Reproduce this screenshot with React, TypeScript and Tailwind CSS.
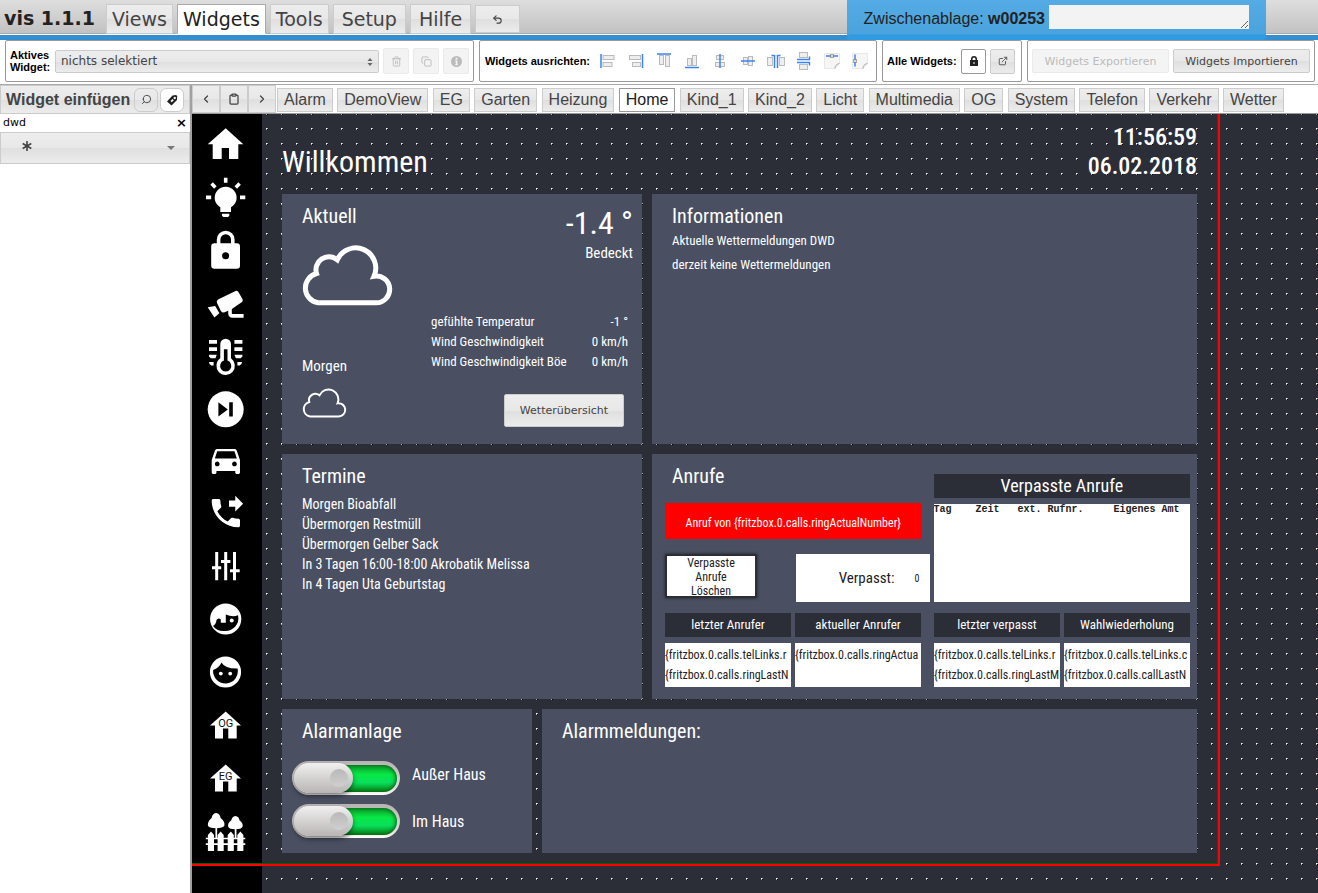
import React from "react";
import clsx from "clsx";
import { ChevronLeft, ChevronRight, Clipboard, Copy, ExternalLink, Search, Trash2, Undo2 } from "lucide-react";

const menuTabs = ["Views", "Widgets", "Tools", "Setup", "Hilfe"];

const viewTabs = [
  "Alarm", "DemoView", "EG", "Garten", "Heizung", "Home", "Kind_1", "Kind_2",
  "Licht", "Multimedia", "OG", "System", "Telefon", "Verkehr", "Wetter",
];

const weather = [
  ["gefühlte Temperatur", "-1 °"],
  ["Wind Geschwindigkeit", "0 km/h"],
  ["Wind Geschwindigkeit Böe", "0 km/h"],
];

const appointments = [
  "Morgen Bioabfall",
  "Übermorgen Restmüll",
  "Übermorgen Gelber Sack",
  "In 3 Tagen 16:00-18:00 Akrobatik Melissa",
  "In 4 Tagen Uta Geburtstag",
];

const callsLeft = [
  { title: "letzter Anrufer", lines: ["{fritzbox.0.calls.telLinks.r", "{fritzbox.0.calls.ringLastN"] },
  { title: "aktueller Anrufer", lines: ["{fritzbox.0.calls.ringActua"] },
];

const callsRight = [
  { title: "letzter verpasst", lines: ["{fritzbox.0.calls.telLinks.r", "{fritzbox.0.calls.ringLastM"] },
  { title: "Wahlwiederholung", lines: ["{fritzbox.0.calls.telLinks.c", "{fritzbox.0.calls.callLastN"] },
];

const raised = "border border-[#ccc] bg-[linear-gradient(#ededed_0%,#e8e8e8_50%,#dfdfdf_51%,#ececec_100%)] text-[#444]";

/* every sidebar icon is drawn on a 40x40 board */
const navIcons: { name: string; art: React.ReactNode }[] = [
  { name: "Home", art: <path d="M20.7 4.3L38.3 20.3H33.3V35H24V24H16.7V35H7.7V20.3H2.7Z" /> },
  {
    name: "Licht",
    art: (
      <>
        <path d="M15.3 35V30.3A11 11 0 1 1 26 30.3V35Z" />
        <path d="M17 36.7h7.3v2l-1.3 1.4h-4.7L17 38.7Z" />
        <path d="M20.7.7v5M1 20.4h5.2M35 20.4h5.3M6.6 6.6l3.8 3.8M34.6 6.6l-3.8 3.8" stroke="#fff" strokeWidth="3.6" />
      </>
    ),
  },
  {
    name: "Schloss",
    art: (
      <>
        <rect x="6.2" y="13.3" width="28.8" height="25.4" rx="3.2" />
        <path d="M13.6 15V9.6a7.1 7.1 0 0 1 14.2 0V15" fill="none" stroke="#fff" strokeWidth="3.6" />
        <circle cx="20.6" cy="25.7" r="3.5" fill="#000" />
      </>
    ),
  },
  {
    name: "Kamera",
    art: (
      <>
        <path d="M13 16.6L30.6 8q1.6-.7 2.6.7l4.3 7.4q.8 1.6-.5 2.8l-10.5 7.4-6.8 3q-2.6.6-3.8-1.4L12 20q-.9-2.3 1-3.4Z" />
        <path d="M2.7 24.3l7.5-1.4 4.2 7.3-5 4.3Z" />
        <path d="M25 24.5v5.8q0 2.6 2.6 2.6h11" fill="none" stroke="#fff" strokeWidth="3.6" />
      </>
    ),
  },
  {
    name: "Heizung",
    art: (
      <>
        <path d="M15.3 8a5.3 5.3 0 0 1 10.7 0v14.3a9.2 9.2 0 1 1-10.7 0Z" />
        <path d="M18.9 13.3h3.6v11.3a5.6 5.6 0 1 1-3.6 0Z" fill="#000" />
        <path d="M4 4h8v3.7H4ZM4 11.3h8V15H4ZM4 18.7h7.7L10.5 22.3H5.8L4 20.4ZM4 26h4.6v3.4H6.4Q4 28.8 4 26ZM29.4 4h8v3.7h-8ZM29.4 11.3h8V15h-8ZM29.4 18.7h8v1.8l-1.8 1.8h-4.7ZM32.4 26H37q0 2.8-2.4 3.4h-2.2Z" />
      </>
    ),
  },
  {
    name: "Medien",
    art: (
      <>
        <circle cx="20.7" cy="20.3" r="18" />
        <path d="M13.4 13.2v14.4l9.4-7.2ZM24.2 13.2h3.6v14.4h-3.6Z" fill="#000" />
      </>
    ),
  },
  {
    name: "Auto",
    art: (
      <path transform="translate(2 .7) scale(1.57)" d="M18.92 5.01C18.72 4.42 18.16 4 17.5 4h-11c-.66 0-1.21.42-1.42 1.01L3 11v8c0 .55.45 1 1 1h1c.55 0 1-.45 1-1v-1h12v1c0 .55.45 1 1 1h1c.55 0 1-.45 1-1v-8l-2.08-5.99zM6.5 15c-.83 0-1.5-.67-1.5-1.5S5.67 12 6.5 12s1.5.67 1.5 1.5S7.33 15 6.5 15zm11 0c-.83 0-1.5-.67-1.5-1.5s.67-1.5 1.5-1.5 1.5.67 1.5 1.5-.67 1.5-1.5 1.5zM5 10l1.5-4.5h11L19 10H5z" />
    ),
  },
  {
    name: "Telefon",
    art: (
      <path transform="translate(2 -.7) scale(1.57)" d="M18 11l5-5-5-5v3h-4v4h4v3zm2 4.5c-1.25 0-2.45-.2-3.57-.57-.35-.11-.74-.03-1.02.24l-2.2 2.2c-2.83-1.44-5.15-3.75-6.59-6.59l2.2-2.21c.28-.26.36-.65.25-1C8.7 6.45 8.5 5.25 8.5 4c0-.55-.45-1-1-1H4c-.55 0-1 .45-1 1 0 9.39 7.61 17 17 17 .55 0 1-.45 1-1v-3.5c0-.55-.45-1-1-1z" />
    ),
  },
  {
    name: "Regler",
    art: <path d="M11.7 4v28.3M20.7 4v28.3M29.5 4v28.3M7 19.7h9.2M16 13.5h9.4M25 22.8h9.7" stroke="#fff" strokeWidth="3" />,
  },
  {
    name: "Kind 1",
    art: (
      <>
        <circle cx="20.7" cy="18" r="15.6" />
        <path d="M8 25q3-1.5 3.5-6 2-2.800 4.300-.4v3.200h5V13.500q6.500 2.800 12.300.8 1.200 7-3 11.500-4.400 4.500-10.600 4.200Q12 30.500 8 25Z" fill="#000" />
        <circle cx="26.7" cy="19.6" r="2" />
      </>
    ),
  },
  {
    name: "Kind 2",
    art: (
      <>
        <circle cx="20.5" cy="18" r="15.6" />
        <path d="M16.5 8.5Q20 15 32.6 14.6a12.4 12.4 0 1 1-24.5 1.5Q14 14 16.5 8.5Z" fill="#000" />
        <circle cx="15.8" cy="19.6" r="1.9" />
        <circle cx="25.2" cy="19.6" r="1.9" />
      </>
    ),
  },
  { name: "Obergeschoss", art: <HouseWithLabel label="OG" /> },
  { name: "Erdgeschoss", art: <HouseWithLabel label="EG" /> },
  {
    name: "Garten",
    art: (
      <>
        <path d="M11 0q4 .6 4.6 5 4.6 3.6 3.8 7.6-1.2 2.7-8.4 2.7T2.9 12.6Q2.4 8.5 6.6 5 7.4.6 11 0ZM30.3 3q3.8.6 4.2 4.3 4 3 3 6.5-1 2.5-7.2 2.5t-7.1-2.5q-.8-3.6 3.1-6.5Q27 3.600 30.300 3Z" />
        <path d="M11.3 15v10M30.6 16v9M.8 25.5h39.5M.8 31.2h39.5" stroke="#fff" strokeWidth="1.7" />
        <path d="M2.9 22L6 18.5 9 22v16H2.9ZM12.6 22l3.1-3.5 3 3.5v16h-6.1ZM22.7 22l3.1-3.5 3 3.5v16h-6.1ZM32.3 22l3.1-3.5 3 3.5v16h-6.1Z" />
      </>
    ),
  },
];

function HouseWithLabel({ label }: { label: string }) {
  return (
    <>
      <path d="M20.7 4.5L36 18.5H31.7V31.5H23.3V21.5H18V31.5H10V18.5H5Z" />
      <text x="20.7" y="20" textAnchor="middle" fontSize="11" fill="#111" fontFamily="Roboto, sans-serif">{label}</text>
    </>
  );
}

const box = { fill: "#eee", stroke: "#bbb" };
const line = { stroke: "#3b82f6", strokeWidth: 1.5 };

const sheet = (
  <>
    <path d="M1.5 1.5h15v10l-4.5 5H1.5Z" fill="#f6f6f6" stroke="#e8e8e8" />
    <path d="M12 16.5q-.2-4 4.5-5" fill="none" stroke="#aaa" />
  </>
);

const alignIcons: { name: string; art: React.ReactNode }[] = [
  { name: "Links", art: <><rect x="4" y="3.5" width="11" height="4" {...box} /><rect x="4" y="10.5" width="9" height="4" {...box} /><path d="M2 2v14" {...line} /></> },
  { name: "Rechts", art: <><rect x="2.5" y="3.5" width="11" height="4" {...box} /><rect x="5.5" y="10.5" width="8" height="4" {...box} /><path d="M15.5 2v14" {...line} /></> },
  { name: "Oben", art: <><rect x="4.5" y="3.5" width="4" height="9" {...box} /><rect x="10.5" y="3.5" width="4" height="11" {...box} /><path d="M2 2h14" {...line} /></> },
  { name: "Unten", art: <><rect x="4.5" y="6.5" width="4" height="7" {...box} /><rect x="9.5" y="3.5" width="4" height="10" {...box} /><path d="M2 15.5h14" {...line} /></> },
  { name: "Mitte horizontal", art: <><rect x="5.5" y="3.5" width="7" height="4" {...box} /><rect x="4.5" y="10.5" width="9" height="4" {...box} /><path d="M9 2v14" {...line} /></> },
  { name: "Mitte vertikal", art: <><rect x="4.5" y="5.5" width="4" height="7" {...box} /><rect x="9.5" y="4.5" width="4" height="9" {...box} /><path d="M2 9h14" {...line} /></> },
  { name: "Abstand horizontal", art: <><rect x=".5" y="5.5" width="5" height="8" {...box} /><rect x="12.5" y="5.5" width="5" height="8" {...box} /><path d="M7.5 3v13M10.5 3v13M4.5 3.5h3M10.5 3.5h3" {...line} /></> },
  { name: "Abstand vertikal", art: <><rect x="4.5" y=".5" width="8" height="5" {...box} /><rect x="4.5" y="12.5" width="8" height="5" {...box} /><path d="M2 7.5h13M2 10.5h13M14.5 4.5v3M14.5 10.5v3" {...line} /></> },
  { name: "Gleiche Breite", art: <>{sheet}<path d="M3 4h12" {...line} /><rect x="7.5" y="2.8" width="3" height="2.4" fill="#fff" stroke="#888" /></> },
  { name: "Gleiche Höhe", art: <>{sheet}<path d="M4 2.5v12" {...line} /><rect x="2.8" y="7.5" width="2.4" height="3" fill="#fff" stroke="#888" /></> },
];

function InfoDot({ size }: { size: number }) {
  return (
    <svg viewBox="0 0 12 12" width={size} height={size} fill="currentColor">
      <path d="M6 0a6 6 0 1 1 0 12A6 6 0 0 1 6 0ZM5 2v2h2V2ZM4.5 5v1h.7v3h-.7v1h3V9H7V5Z" fillRule="evenodd" />
    </svg>
  );
}

function ToolGroup({ className, children }: { className?: string; children: React.ReactNode }) {
  return (
    <div className={clsx("flex h-[42px] items-center rounded-[2px] border border-[#999] bg-white", className)}>
      {children}
    </div>
  );
}

function Cloud({ className, stroke }: { className: string; stroke: number }) {
  return (
    <svg viewBox="0 0 91 61" className={clsx("overflow-visible", className)} fill="none" stroke="#fff" strokeWidth={stroke}>
      <path d="M16 57.8A15 15 0 0 1 14.5 28.5A13 13 0 0 1 35.3 14.8A20 20 0 1 1 72 31.2A13.4 13.4 0 1 1 74 57.8Z" />
    </svg>
  );
}

function Panel({ title, className, children }: { title: string; className?: string; children?: React.ReactNode }) {
  return (
    <section className={clsx("bg-[#4a5062] pt-[10px] pl-5", className)}>
      <h2 className="text-[20px] leading-6">{title}</h2>
      {children}
    </section>
  );
}

function Switch({ id }: { id: string }) {
  return (
    <span className="relative flex h-[34px] w-[108px] items-center rounded-full bg-[linear-gradient(#b5b3b3,#e6e2de_85%,#fff)] p-[3px]">
      <input id={id} type="checkbox" defaultChecked className="absolute inset-0 z-10 h-full w-full cursor-pointer opacity-0" />
      <span className="ml-8 h-[27px] flex-1 rounded-full bg-[linear-gradient(#089a28,#09e845_35%,#08df5c_65%,#067f10)] shadow-[inset_-1px_0_4px_#0a5a14]" />
      <span className="absolute top-[2px] left-[2px] flex h-[30px] w-[59px] items-center justify-end rounded-full bg-[linear-gradient(#f1efef,#cfcccc_60%,#b9b5b5)] pr-[5px] shadow-[0_3px_5px_rgba(0,0,0,0.5)]">
        <span className="h-[18px] w-[18px] rounded-full bg-[linear-gradient(#b9b9b9,#cfcfcf)]" />
      </span>
    </span>
  );
}

function CallBox({ title, lines }: { title: string; lines: string[] }) {
  return (
    <div className="min-w-0 flex-1">
      <h3 className="bg-[#2b2d37] text-center text-[13px] leading-6">{title}</h3>
      <div className="mt-[6px] h-11 overflow-hidden bg-white pt-[2px] text-[12px] leading-5 whitespace-nowrap text-[#222]">
        {lines.map((l) => <p key={l}>{l}</p>)}
      </div>
    </div>
  );
}

export default function App() {
  return (
    <div className="flex min-h-screen flex-col bg-white font-['DejaVu_Sans',sans-serif]">
      {/* Main menu */}
      <header className="flex h-10 items-start border-b-[5px] border-[#348fd2] bg-[linear-gradient(#dedede,#c2c2c2_33px,#aaa_33px,#aaa_34px,#fff_34px)]">
        <h1 className="w-[106px] pl-1 text-[19px] leading-9 font-bold text-[#222]">vis 1.1.1</h1>
        <nav className="flex items-end gap-1 pt-1">
          {menuTabs.map((t, i) => (
            <button
              key={t}
              className={clsx(
                "h-[30px] border text-[19px] leading-7",
                i < 3 ? "px-[5px]" : "px-2",
                t === "Widgets" ? "border-[#aaa] border-b-white bg-white text-[#212121]" : raised,
              )}
            >
              {t}
            </button>
          ))}
          <button aria-label="Rückgängig" className={clsx("flex h-7 w-[45px] items-center justify-center self-center", raised)}>
            <Undo2 size={11} strokeWidth={2.5} />
          </button>
        </nav>
        <div className="z-10 mr-[52px] ml-auto flex h-10 items-start gap-1 rounded-b bg-[linear-gradient(#55abe4,#4aa3dd_34px,#309ae2_35px)] px-[17px] font-['Liberation_Sans',sans-serif] text-[16px] leading-[37px] text-[#222]">
          <label htmlFor="clip">Zwischenablage: <b>w00253</b></label>
          <textarea id="clip" className="mt-[5px] h-6 w-[200px] bg-[#f3f3f3]" />
        </div>
      </header>

      {/* Toolbar */}
      <div className="flex h-[45px] items-start gap-[5px] border-b border-[#aaa] pr-[3px] pl-[5px] font-['Liberation_Sans',sans-serif] text-[11px] font-bold text-black">
        <ToolGroup className="w-[469px] gap-1 px-1">
          <label htmlFor="active" className="w-[41px] leading-3">Aktives Widget:</label>
          <div className="relative flex-1">
            <select id="active" className={clsx("h-[23px] w-full appearance-none rounded-[2px] px-[5px] font-['DejaVu_Sans',sans-serif] text-[12px] font-normal", raised)}>
              <option>nichts selektiert</option>
            </select>
            <svg viewBox="0 0 6 8" className="pointer-events-none absolute top-2 right-[6px] h-2 w-[6px]" fill="#666"><path d="M3 0l2.5 3h-5ZM3 8l2.5-3h-5Z" /></svg>
          </div>
          {[Trash2, Copy, InfoDot].map((Icon, i) => (
            <button key={i} disabled aria-label={["Löschen", "Kopieren", "Info"][i]} className="flex h-[26px] w-[26px] items-center justify-center rounded-[2px] border border-[#eaeaea] bg-[#f3f3f3] text-[#bbb]">
              <Icon size={11} />
            </button>
          ))}
        </ToolGroup>
        <ToolGroup className="w-[398px] pl-[5px]">
          <span className="w-[109px]">Widgets ausrichten:</span>
          {alignIcons.map((a) => (
            <button key={a.name} aria-label={a.name} className="flex w-7 justify-center">
              <svg viewBox="0 0 18 18" className="h-[18px] w-[18px] overflow-visible">{a.art}</svg>
            </button>
          ))}
        </ToolGroup>
        <ToolGroup className="w-[140px] gap-1 pl-1">
          <span className="w-[70px] whitespace-nowrap">Alle Widgets:</span>
          <button aria-label="Sperren" className="flex h-[25px] w-[25px] items-center justify-center rounded-[2px] border border-[#999] bg-white text-[#222]">
            <svg viewBox="0 0 8 10" className="h-[10px] w-2" fill="currentColor"><path d="M0 4h1V3a3 3 0 0 1 6 0v1h1v6H0ZM2.5 4h3V3a1.5 1.5 0 0 0-3 0Z" /><path d="M3.5 6h1v2h-1Z" fill="#fff" /></svg>
          </button>
          <button aria-label="Öffnen" className={clsx("flex h-[25px] w-[25px] items-center justify-center rounded-[2px]", raised)}>
            <ExternalLink size={10} />
          </button>
        </ToolGroup>
        <ToolGroup className="flex-1 gap-1 px-1 font-['DejaVu_Sans',sans-serif] font-normal">
          <button disabled className="h-6 flex-1 rounded-[2px] border border-[#eaeaea] bg-[#f4f4f4] pt-[2px] whitespace-nowrap text-[#bbb]">Widgets Exportieren</button>
          <button className={clsx("h-6 flex-1 rounded-[2px] pt-[2px] whitespace-nowrap", raised)}>Widgets Importieren</button>
        </ToolGroup>
      </div>

      <div className="flex flex-1">
        {/* Widget palette */}
        <aside className="flex w-[192px] shrink-0 flex-col border-r-2 border-[#a0a0a0]">
          <div className={clsx("flex h-[29px] items-center gap-[2px] pl-[5px] font-['Liberation_Sans',sans-serif]", raised)}>
            <h2 className="w-[126px] text-[16px] font-bold whitespace-nowrap">Widget einfügen</h2>
            <button aria-label="Suchen" className="flex h-6 w-6 items-center justify-center rounded-md border border-[#ccc]">
              <Search size={11} className="-scale-x-100" />
            </button>
            <button aria-label="Kategorien" className="flex h-6 w-6 items-center justify-center rounded-md border border-[#ccc] bg-white text-[#222]">
              <svg viewBox="0 0 12 12" className="h-3 w-3" fill="currentColor"><path d="M6.5 1.5L10 1l1.2 1L11 6l-5.5 5.5L1 7.5ZM8.7 2.8a1.2 1.2 0 1 0 .1 0ZM4.5 7l1.3 1.3 2-2L6.5 5Z" fillRule="evenodd" /></svg>
            </button>
          </div>
          <div className="flex h-[18px] items-center px-[3px]">
            <input aria-label="Filter" defaultValue="dwd" className="w-full min-w-0 flex-1 text-[11px] text-black outline-none" />
            <button aria-label="Leeren" className="text-[13px] leading-4 font-bold text-black">×</button>
          </div>
          <button aria-label="Widgetsatz" className={clsx("flex h-8 items-center justify-between pr-[14px] pl-5", raised)}>
            <svg viewBox="0 0 12 12" className="-mt-1 h-3 w-3" stroke="#444" strokeWidth="1.6"><path d="M6 1v10M1.7 3.5l8.6 5M10.3 3.5l-8.6 5" /></svg>
            <svg viewBox="0 0 8 4" className="h-1 w-2" fill="#777"><path d="M0 0h8L4 4Z" /></svg>
          </button>
        </aside>

        <div className="flex min-w-0 flex-1 flex-col">
          {/* View tabs */}
          <div className="flex h-[29px] items-center border-b border-[#999] font-['Liberation_Sans',sans-serif]">
            <div className="flex h-full">
              {[ChevronLeft, Clipboard, ChevronRight].map((Icon, i) => (
                <button key={i} aria-label={["Zurück", "Ablage", "Weiter"][i]} className={clsx("flex w-7 items-center justify-center", raised)}>
                  <Icon size={12} strokeWidth={2.5} />
                </button>
              ))}
            </div>
            <nav className="flex flex-1 justify-between pt-px pr-[34px] pl-px">
              {viewTabs.map((t) => (
                <button
                  key={t}
                  className={clsx("h-6 border px-[6px] text-[16px] leading-[22px]", t === "Home" ? "border-[#999] bg-white text-[#212121]" : raised)}
                >
                  {t}
                </button>
              ))}
            </nav>
          </div>

          {/* Canvas with the snap grid */}
          <main className="relative flex flex-1 bg-[#2b2d37] bg-[conic-gradient(at_1px_1px,transparent_270deg,#fff_0),conic-gradient(at_1px_1px,transparent_270deg,#000_0),conic-gradient(at_2px_2px,transparent_270deg,#ffffff99_0)] bg-[length:15px_15px] bg-[position:14px_14px,0px_0px,14px_14px] font-['Roboto_Condensed',Roboto,sans-serif] text-white">
            <nav className="flex w-[70px] shrink-0 flex-col gap-[13px] bg-black pt-[10px] pl-[13px]">
              {navIcons.map((n) => (
                <a key={n.name} href="#" aria-label={n.name}>
                  <svg viewBox="0 0 40 40" className="block h-10 w-10 overflow-visible" fill="#fff">{n.art}</svg>
                </a>
              ))}
            </nav>
            <div className="min-w-0 flex-1 pr-[121px] pl-5">
              <div className="flex h-20 items-start justify-between">
                <h1 className="pt-7 text-[30px] leading-10">Willkommen</h1>
                <div className="pt-[9px] text-right text-[24px] leading-[29px] font-medium">
                  <p>11:56:59</p>
                  <p>06.02.2018</p>
                </div>
              </div>

              <div className="grid grid-cols-[minmax(0,360fr)_minmax(0,545fr)] gap-[10px]">
                <section className="flex h-[250px] bg-[#4a5062] pt-[10px] pr-[9px] pl-5">
                  <div className="w-[129px]">
                    <h2 className="text-[20px] leading-6">Aktuell</h2>
                    <Cloud stroke={5} className="mt-[17px] h-[61px] w-[91px]" />
                    <h3 className="mt-[50px] text-[15px] leading-5">Morgen</h3>
                    <Cloud stroke={4} className="mt-3 h-[30px] w-[45px]" />
                  </div>
                  <div className="flex flex-1 flex-col items-end">
                    <p className="text-[32px] leading-[38px]">-1.4 °</p>
                    <p className="text-[15px] leading-[22px]">Bedeckt</p>
                    <table className="mt-12 w-full text-[13px] leading-5">
                      <tbody>
                        {weather.map(([k, v]) => (
                          <tr key={k}>
                            <th scope="row" className="p-0 text-left font-normal">{k}</th>
                            <td className="py-0 pr-[5px] pl-0 text-right">{v}</td>
                          </tr>
                        ))}
                      </tbody>
                    </table>
                    <button className={clsx("mt-[22px] mr-[9px] h-[33px] w-[120px] rounded-[2px] pt-[2px] font-['DejaVu_Sans',sans-serif] text-[11px]", raised)}>
                      Wetterübersicht
                    </button>
                  </div>
                </section>

                <Panel title="Informationen">
                  <div className="pt-px text-[13px] leading-6">
                    <p>Aktuelle Wettermeldungen DWD</p>
                    <p>derzeit keine Wettermeldungen</p>
                  </div>
                </Panel>

                <Panel title="Termine" className="h-[245px]">
                  <ul className="mt-[6px] text-[14px] leading-5">
                    {appointments.map((a) => <li key={a}>{a}</li>)}
                  </ul>
                </Panel>

                <section className="flex flex-col gap-[11px] bg-[#4a5062] pr-[7px] pl-[13px]">
                  <div className="grid h-[148px] grid-cols-2 gap-3">
                    <div>
                      <h2 className="pt-[10px] pl-[7px] text-[20px] leading-6">Anrufe</h2>
                      <p className="mt-[15px] h-9 bg-[#f00] text-center text-[12px] leading-10">
                        Anruf von {"{fritzbox.0.calls.ringActualNumber}"}
                      </p>
                      <div className="mt-[15px] flex items-start justify-between">
                        <button className="h-11 w-[92px] border-2 border-[#2b2d37] bg-white px-4 text-[12px] leading-[14px] text-[#222] shadow-[0_0_3px_#222]">
                          Verpasste Anrufe Löschen
                        </button>
                        <p className="-mr-2 flex h-12 w-[134px] items-center justify-end gap-5 bg-white pr-[10px] text-[15px] text-[#222]">
                          Verpasst: <span className="text-[10px]">0</span>
                        </p>
                      </div>
                    </div>
                    <div className="pt-5">
                      <h2 className="bg-[#2b2d37] text-center text-[18px] leading-6">Verpasste Anrufe</h2>
                      <pre className="mt-[6px] h-[98px] overflow-hidden bg-white font-['Liberation_Mono',monospace] text-[10px] leading-3 font-bold text-[#222]">
                        {"Tag    Zeit   ext. Rufnr.     Eigenes Amt"}
                      </pre>
                    </div>
                  </div>
                  <div className="flex gap-[13px]">
                    <div className="flex min-w-0 flex-1 gap-1">{callsLeft.map((c) => <CallBox key={c.title} {...c} />)}</div>
                    <div className="flex min-w-0 flex-1 gap-1">{callsRight.map((c) => <CallBox key={c.title} {...c} />)}</div>
                  </div>
                </section>
              </div>

              <div className="mt-[10px] grid h-36 grid-cols-[250fr_655fr] gap-[10px]">
                <Panel title="Alarmanlage">
                  <div className="mt-[18px] -ml-[10px] flex gap-3">
                    <div className="flex flex-col gap-[9px]">
                      <Switch id="away" />
                      <Switch id="home" />
                    </div>
                    <div className="flex flex-col gap-[27px] pt-1 text-[16px] leading-5">
                      <label htmlFor="away">Außer Haus</label>
                      <label htmlFor="home">Im Haus</label>
                    </div>
                  </div>
                </Panel>
                <Panel title="Alarmmeldungen:" />
              </div>
            </div>

            {/* Edge of the target screen */}
            <div className="pointer-events-none absolute top-0 right-[98px] left-0 h-[752px] border-r-2 border-b-2 border-[#f00]">
              <div className="h-full border-r border-b border-[#0a5a0a]" />
            </div>
          </main>
        </div>
      </div>
    </div>
  );
}
